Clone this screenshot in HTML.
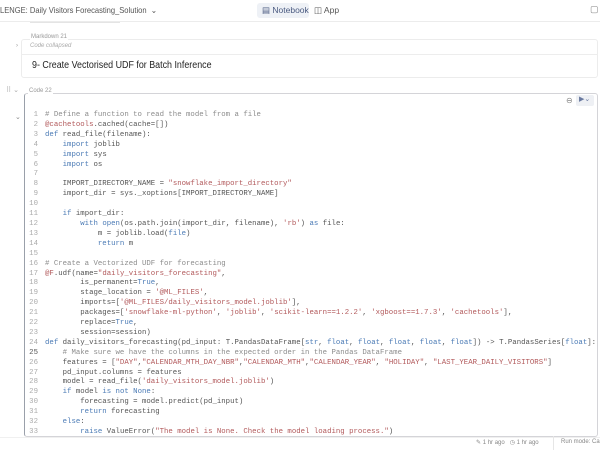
<!DOCTYPE html>
<html><head><meta charset="utf-8"><style>
*{margin:0;padding:0;box-sizing:border-box}
body{width:600px;height:450px;overflow:hidden;background:#fff;font-family:"Liberation Sans",sans-serif;position:relative;color:#333}
.abs{position:absolute}
.top{left:0;top:0;width:600px;height:22px;border-bottom:1px solid #ececec}
.code{left:24px;top:93px;width:574px;height:344px;border:1px solid #d4d4d8;border-left:1.5px solid #9aa0aa;border-radius:3px}
pre{position:absolute;left:0;top:111px;font-family:"Liberation Mono",monospace;font-size:7.35px;line-height:9.9px;color:#555}
.ln{display:inline-block;width:38px;text-align:right;color:#aaa;margin-right:7px}
.c{color:#8c8c8c}.k{color:#4a7ab5}.s{color:#b2595b}.d{color:#b07070}
.sx{transform:scaleX(0.89);transform-origin:left center;white-space:nowrap}
</style></head><body>
<div class="abs top"></div>
<div class="abs sx" style="left:0;top:5px;font-size:8.5px;color:#555">LENGE: Daily Visitors Forecasting_Solution &nbsp;⌄</div>
<div class="abs" style="left:257px;top:3px;width:52px;height:15px;background:#eef1f6;border-radius:3px"></div>
<div class="abs" style="left:262px;top:5px;font-size:8.5px;color:#4a5a80">▤ Notebook</div>
<div class="abs" style="left:314px;top:5px;font-size:8.5px;color:#555">◫ App</div>
<div class="abs" style="left:590px;top:4px;font-size:9px;color:#888">▢</div>
<div class="abs" style="left:30px;top:22px;width:90px;height:1px;background:#e4e4e4"></div>

<div class="abs" style="left:21px;top:39px;width:577px;height:39px;border:1px solid #ececec;border-radius:3px"></div>
<div class="abs" style="left:21px;top:54px;width:577px;height:1px;background:#ededed"></div>
<div class="abs" style="left:30px;top:34px;font-size:6px;color:#999;background:#fff;padding:0 1px">Markdown 21</div>
<div class="abs" style="left:30px;top:43px;font-size:6px;color:#aaa;font-style:italic">Code collapsed</div>
<div class="abs" style="left:16px;top:43px;font-size:6px;color:#999">›</div>
<div class="abs sx" style="left:32px;top:60px;font-size:10px;color:#222">9- Create Vectorised UDF for Batch Inference</div>

<div class="abs" style="left:6px;top:86px;font-size:7px;color:#aaa">⠿ ⌄</div>
<div class="abs code"></div>
<div class="abs" style="left:28px;top:88px;font-size:6px;color:#999;background:#fff;padding:0 1px">Code 22</div>
<div class="abs" style="left:15px;top:113px;font-size:7px;color:#888">⌄</div>
<div class="abs" style="left:566px;top:96px;font-size:8px;color:#888">⊖</div>
<div class="abs" style="left:576px;top:95px;width:18px;height:11px;background:#eef0f4;border-radius:2px;font-size:7px;color:#6a7aa0;padding-left:3px">▶⌄</div>
<pre><span class="ln">1</span><span class="c"># Define a function to read the model from a file</span>
<span class="ln">2</span><span class="s">@cachetools</span>.cached(cache=[])
<span class="ln">3</span><span class="k">def</span> read_file(filename):
<span class="ln">4</span>    <span class="k">import</span> joblib
<span class="ln">5</span>    <span class="k">import</span> sys
<span class="ln">6</span>    <span class="k">import</span> os
<span class="ln">7</span>
<span class="ln">8</span>    IMPORT_DIRECTORY_NAME = <span class="s">"snowflake_import_directory"</span>
<span class="ln">9</span>    import_dir = sys._xoptions[IMPORT_DIRECTORY_NAME]
<span class="ln">10</span>
<span class="ln">11</span>    <span class="k">if</span> import_dir:
<span class="ln">12</span>        <span class="k">with</span> <span class="k">open</span>(os.path.join(import_dir, filename), <span class="s">'rb'</span>) <span class="k">as</span> file:
<span class="ln">13</span>            m = joblib.load(<span class="k">file</span>)
<span class="ln">14</span>            <span class="k">return</span> m
<span class="ln">15</span>
<span class="ln">16</span><span class="c"># Create a Vectorized UDF for forecasting</span>
<span class="ln">17</span><span class="s">@F</span>.udf(name=<span class="s">"daily_visitors_forecasting"</span>,
<span class="ln">18</span>        is_permanent=<span class="k">True</span>,
<span class="ln">19</span>        stage_location = <span class="s">'@ML_FILES'</span>,
<span class="ln">20</span>        imports=[<span class="s">'@ML_FILES/daily_visitors_model.joblib'</span>],
<span class="ln">21</span>        packages=[<span class="s">'snowflake-ml-python'</span>, <span class="s">'joblib'</span>, <span class="s">'scikit-learn==1.2.2'</span>, <span class="s">'xgboost==1.7.3'</span>, <span class="s">'cachetools'</span>],
<span class="ln">22</span>        replace=<span class="k">True</span>,
<span class="ln">23</span>        session=session)
<span class="ln">24</span><span class="k">def</span> daily_visitors_forecasting(pd_input: T.PandasDataFrame[<span class="k">str</span>, <span class="k">float</span>, <span class="k">float</span>, <span class="k">float</span>, <span class="k">float</span>, <span class="k">float</span>]) -&gt; T.PandasSeries[<span class="k">float</span>]:
<span class="ln" style="color:#555">25</span>    <span class="c"># Make sure we have the columns in the expected order in the Pandas DataFrame</span>
<span class="ln">26</span>    features = [<span class="s">"DAY"</span>,<span class="s">"CALENDAR_MTH_DAY_NBR"</span>,<span class="s">"CALENDAR_MTH"</span>,<span class="s">"CALENDAR_YEAR"</span>, <span class="s">"HOLIDAY"</span>, <span class="s">"LAST_YEAR_DAILY_VISITORS"</span>]
<span class="ln">27</span>    pd_input.columns = features
<span class="ln">28</span>    model = read_file(<span class="s">'daily_visitors_model.joblib'</span>)
<span class="ln">29</span>    <span class="k">if</span> model <span class="k">is not None</span>:
<span class="ln">30</span>        forecasting = model.predict(pd_input)
<span class="ln">31</span>        <span class="k">return</span> forecasting
<span class="ln">32</span>    <span class="k">else</span>:
<span class="ln">33</span>        <span class="k">raise</span> ValueError(<span class="s">"The model is None. Check the model loading process."</span>)</pre>
<div class="abs" style="left:0;top:437px;width:600px;height:13px;background:#fff;border-top:1px solid #f0f0f0"></div>
<div class="abs" style="left:476px;top:439px;font-size:6px;color:#888">✎ 1 hr ago &nbsp; ◷ 1 hr ago</div>
<div class="abs" style="left:553px;top:436px;width:1px;height:14px;background:#e6e6e6"></div>
<div class="abs" style="left:561px;top:439px;font-size:6px;color:#888;white-space:nowrap">Run mode: Ca</div>
</body></html>
